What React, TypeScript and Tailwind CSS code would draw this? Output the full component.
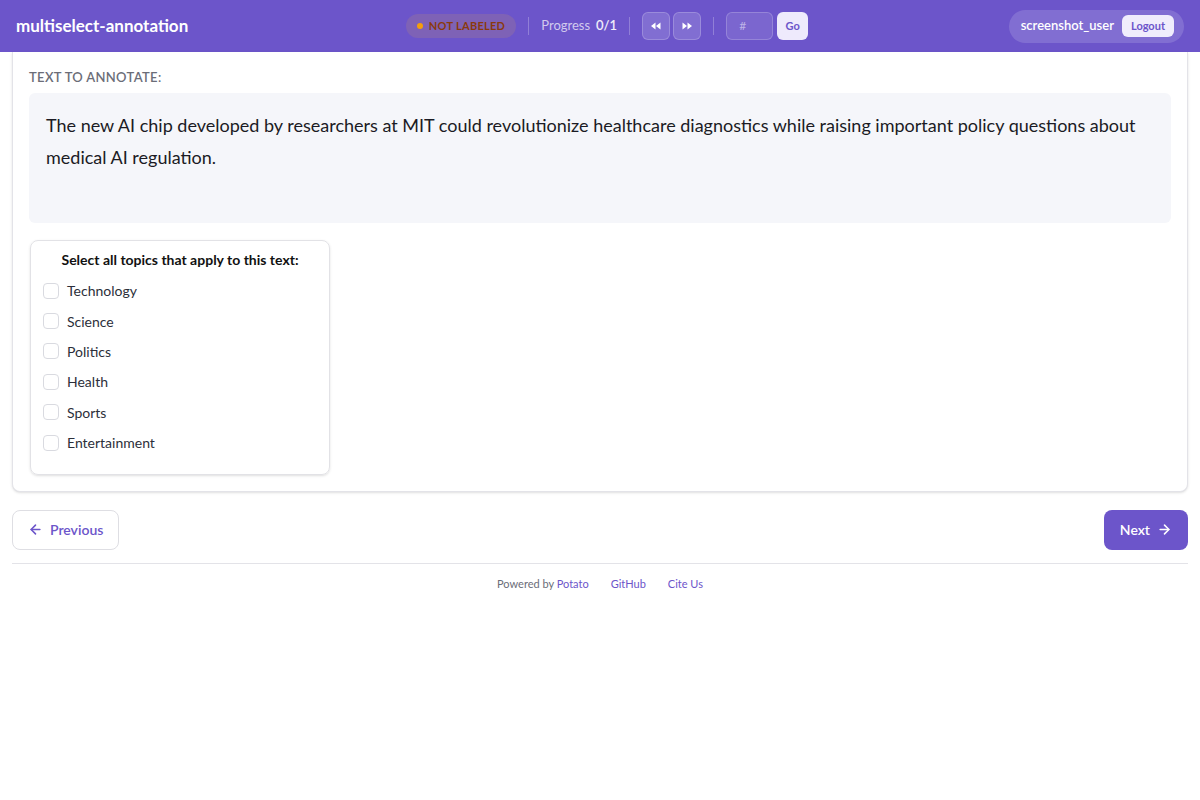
import { ArrowLeft, ArrowRight } from "lucide-react";

const topics = ["Technology", "Science", "Politics", "Health", "Sports", "Entertainment"];

function Rewind() {
  return (
    <svg width="12" height="12" viewBox="0 0 24 24" fill="currentColor">
      <path d="M11 5v14L2 12z" />
      <path d="M21 5v14l-9-7z" />
    </svg>
  );
}

function Forward() {
  return (
    <svg width="12" height="12" viewBox="0 0 24 24" fill="currentColor">
      <path d="M3 5v14l9-7z" />
      <path d="M13 5v14l9-7z" />
    </svg>
  );
}

export default function App() {
  return (
    <div className="min-h-screen bg-white font-['Lato','Noto_Sans',sans-serif] text-[#1f2333]">
      <header className="h-[52px] bg-[#6c55ca] flex items-center justify-between px-4">
        <div className="text-white font-bold text-[17px] w-[380px]">multiselect-annotation</div>

        <div className="flex items-center ml-[4px] whitespace-nowrap">
          <div className="flex shrink-0 items-center gap-[6px] h-[24px] px-[11px] rounded-full bg-[#7e62b6]">
            <span className="w-[6px] h-[6px] rounded-full bg-[#f59e0b]" />
            <span className="text-[11px] font-bold text-[#8a3a0c] tracking-wide">NOT LABELED</span>
          </div>
          <div className="w-px h-[18px] bg-white/25 mx-3" />
          <span className="text-[13px] text-white/70">Progress</span>
          <span className="text-[13px] text-white/90 font-semibold ml-[6px]">0/1</span>
          <div className="w-px h-[18px] bg-white/25 mx-3" />
          <button className="w-[28px] h-[28px] rounded-md bg-white/15 border border-white/20 flex items-center justify-center text-white">
            <Rewind />
          </button>
          <button className="w-[28px] h-[28px] ml-[3px] rounded-md bg-white/15 border border-white/20 flex items-center justify-center text-white">
            <Forward />
          </button>
          <div className="w-px h-[18px] bg-white/25 mx-3" />
          <div className="w-[47px] h-[28px] rounded-md bg-white/10 border border-white/20 flex items-center px-[12px] text-[12px] text-white/50">
            #
          </div>
          <button className="w-[31px] h-[28px] ml-[4px] rounded-md bg-[#eeeafc] text-[#6c55ca] text-[11px] font-bold">
            Go
          </button>
        </div>

        <div className="w-[370px] flex justify-end">
          <div className="flex items-center h-[33px] pl-[12px] pr-[10px] gap-[8px] rounded-full bg-white/15 whitespace-nowrap">
            <span className="text-white text-[13px] font-semibold">screenshot_user</span>
            <button className="h-[22px] px-[9px] rounded-md bg-[#f0edfc] text-[#6c55ca] text-[11px] font-bold">
              Logout
            </button>
          </div>
        </div>
      </header>

      <main className="px-3">
        <div className="bg-white border border-[#e3e3e8] border-t-0 rounded-b-lg px-4 pt-4 pb-4 shadow-sm">
          <div className="text-[13px] font-semibold text-[#6b6d78] tracking-wide uppercase mb-[5px]">
            Text to annotate:
          </div>
          <div className="bg-[#f5f6fa] rounded-md px-[17px] pt-[16px] h-[130px] text-[18px] leading-[32px] text-[#1b1b24]">
            The new AI chip developed by researchers at MIT could revolutionize healthcare diagnostics while raising important policy questions about medical AI regulation.
          </div>

          <div className="mt-[17px] w-[300px] border border-[#e2e2e6] rounded-lg shadow-sm px-[12px] pt-[8px] pb-[16px] ml-px">
            <div className="text-center font-bold text-[14px] text-[#111] mb-[6px]">
              Select all topics that apply to this text:
            </div>
            <div className="flex flex-col">
              {topics.map((t) => (
                <label key={t} className="flex items-center gap-[8px] h-[30.4px]">
                  <span className="w-[16px] h-[16px] rounded-[4px] border border-[#d9dae0] bg-white" />
                  <span className="text-[14px] text-[#2c2f3a]">{t}</span>
                </label>
              ))}
            </div>
          </div>
        </div>

        <div className="flex justify-between mt-[18px]">
          <button className="h-[40px] px-[15px] rounded-lg border border-[#dedee3] bg-white flex items-center gap-[7px] text-[#6c55ca] text-[14px] font-semibold">
            <ArrowLeft size={15} strokeWidth={2.5} />
            Previous
          </button>
          <button className="h-[40px] px-[16px] rounded-lg bg-[#6c55ca] flex items-center gap-[7px] text-white text-[14px] font-semibold">
            Next
            <ArrowRight size={15} strokeWidth={2.5} />
          </button>
        </div>

        <footer className="mt-[13px] border-t border-[#e3e3e8] pt-[12px] flex justify-center items-center gap-[22px] text-[11px]">
          <span className="text-[#6b6d78]">
            Powered by <span className="text-[#6c55ca]">Potato</span>
          </span>
          <span className="text-[#6c55ca]">GitHub</span>
          <span className="text-[#6c55ca]">Cite Us</span>
        </footer>
      </main>
    </div>
  );
}
